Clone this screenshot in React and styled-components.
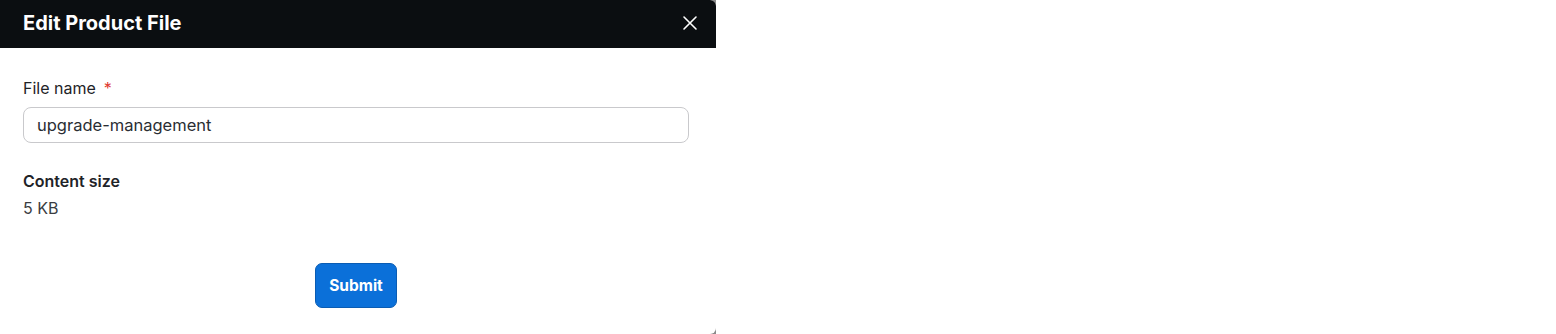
import React from "react";
import styled, { createGlobalStyle } from "styled-components";

const Global = createGlobalStyle`
  html, body { margin: 0; padding: 0; background: #ffffff; }
  body { font-family: Inter, "Noto Sans", sans-serif; }
  * { box-sizing: border-box; }
`;

const Backdrop = styled.div`
  width: 716px;
  height: 334px;
  background: #8a8a8a;
`;

const Panel = styled.div`
  width: 716px;
  height: 334px;
  background: #ffffff;
  border-radius: 0 6px 6px 0;
  overflow: hidden;
  display: flex;
  flex-direction: column;
`;

const Header = styled.div`
  height: 48px;
  flex: none;
  background: #0b0e11;
  display: flex;
  align-items: center;
  justify-content: space-between;
  padding: 0 17px 2px 23px;
`;

const Title = styled.h2`
  margin: 0;
  color: #ffffff;
  font-size: 20px;
  font-weight: 700;
  letter-spacing: 0;
`;

const CloseButton = styled.button`
  border: 0;
  background: none;
  padding: 0;
  width: 18px;
  height: 18px;
  display: flex;
  align-items: center;
  justify-content: center;
  cursor: pointer;
`;

const Body = styled.div`
  padding: 30px 27px 0 23px;
  display: flex;
  flex-direction: column;
`;

const Label = styled.label`
  font-size: 16px;
  color: #1f2328;
  line-height: 20px;
  display: flex;
  gap: 8px;
`;

const Required = styled.span`
  color: #e0392f;
`;

const Input = styled.input`
  margin-top: 9px;
  height: 36px;
  width: 666px;
  border: 1px solid #c9c9cc;
  border-radius: 8px;
  padding: 0 13px;
  font-family: inherit;
  font-size: 16.5px;
  color: #2a2d33;
  outline: none;
`;

const InfoBlock = styled.div`
  margin-top: 28px;
  display: flex;
  flex-direction: column;
  gap: 7px;
`;

const InfoTitle = styled.div`
  font-size: 16px;
  font-weight: 600;
  color: #1f2328;
  line-height: 20px;
`;

const InfoValue = styled.div`
  font-size: 16px;
  color: #3a3d42;
  line-height: 20px;
`;

const Actions = styled.div`
  margin-top: 45px;
  width: 666px;
  display: flex;
  justify-content: center;
`;

const SubmitButton = styled.button`
  width: 82px;
  height: 45px;
  background: #0b70d9;
  border: 1px solid #0a5cb3;
  border-radius: 7px;
  color: #ffffff;
  font-family: inherit;
  font-weight: 700;
  font-size: 15.5px;
  cursor: pointer;
`;

export default function App() {
  return (
    <>
      <Global />
      <Backdrop>
        <Panel>
          <Header>
            <Title>Edit Product File</Title>
            <CloseButton aria-label="Close">
              <svg width="16" height="16" viewBox="0 0 16 16">
                <path d="M2 2L14 14M14 2L2 14" stroke="#ffffff" strokeWidth="1.6" strokeLinecap="round" />
              </svg>
            </CloseButton>
          </Header>
          <Body>
            <Label>
              File name <Required>*</Required>
            </Label>
            <Input defaultValue="upgrade-management" />
            <InfoBlock>
              <InfoTitle>Content size</InfoTitle>
              <InfoValue>5 KB</InfoValue>
            </InfoBlock>
            <Actions>
              <SubmitButton>Submit</SubmitButton>
            </Actions>
          </Body>
        </Panel>
      </Backdrop>
    </>
  );
}
